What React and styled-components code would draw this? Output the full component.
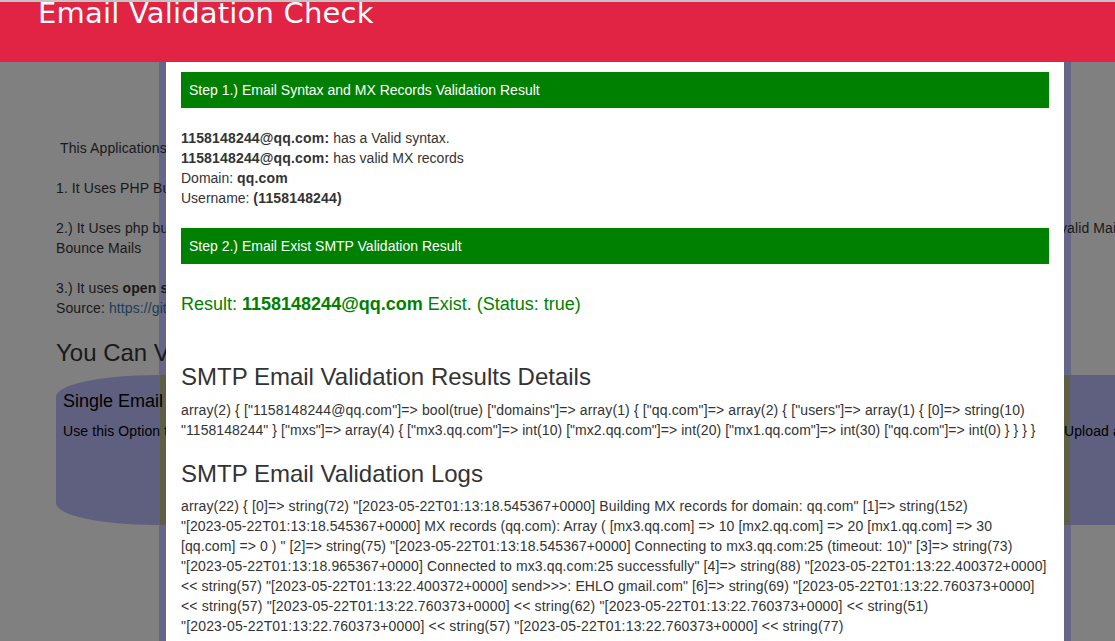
import React from "react";
import styled, { createGlobalStyle } from "styled-components";

const Global = createGlobalStyle`
  html, body { margin: 0; padding: 0; height: 100%; overflow: hidden; background: #808080; }
  body { font-family: "Liberation Sans", Arial, sans-serif; font-size: 14px; line-height: 20px; color: #333; }
  * { box-sizing: border-box; }
`;

const Viewport = styled.div`
  position: relative;
  width: 1115px;
  height: 641px;
  overflow: hidden;
  background: #808080;
`;

const Page = styled.main`
  position: relative;
  z-index: 1;
  width: 1268px;
  padding: 138px 56px 0;
  color: #191919;
  letter-spacing: 0.1px;
`;

const Para = styled.p`
  margin: 0 0 20px;
`;

const Row = styled.div`
  display: flex;
  white-space: nowrap;
`;

const Clip = styled.span`
  flex: none;
  width: ${(p) => p.$w}px;
  overflow: hidden;
`;

const Link = styled.a`
  color: #1a3d5b;
  text-decoration: none;
`;

const PageTitle = styled.h2`
  margin: 22px 0 9px;
  font-size: 24px;
  font-weight: 500;
  line-height: 26px;
  letter-spacing: 0;
`;

const OptionCard = styled.section`
  height: 150px;
  background:
    linear-gradient(90deg,
      transparent 104px, #5f5f44 104px, #5f5f44 110px, transparent 110px,
      transparent 1008px, #5f5f44 1008px, #5f5f44 1014px, transparent 1014px),
    #5f5f7f;
  border-radius: 100px / 22px;
  padding: 16px 7px;
  color: #000;
`;

const OptionTitle = styled.h3`
  margin: 0 0 10px;
  font-size: 18px;
  font-weight: 500;
  line-height: 20px;
  letter-spacing: 0;
`;

const FrameEdge = styled.i`
  position: absolute;
  top: 62px;
  bottom: 0;
  width: 7px;
  left: ${(p) => p.$x}px;
  background: #666688;
`;

const Header = styled.header`
  position: absolute;
  top: 0;
  left: 0;
  right: 0;
  height: 62px;
  overflow: hidden;
  background: #e12344;
  border-top: 2px solid #c4c4c4;
  z-index: 3;
  padding-left: 38px;
`;

const Brand = styled.h1`
  margin: -9px 0 0;
  font-family: "DejaVu Sans", sans-serif;
  font-size: 29px;
  font-weight: 400;
  line-height: 40px;
  letter-spacing: 0.2px;
  color: #fff;
`;

const Modal = styled.div`
  position: absolute;
  top: 62px;
  left: 166px;
  width: 898px;
  height: 579px;
  z-index: 2;
  background: #fff;
  padding: 10px 15px 0;
  overflow: hidden;
`;

const StepBar = styled.div`
  height: 36px;
  background: #008000;
  color: #fff;
  padding: 8px;
`;

const Summary = styled.div`
  margin: 20px 0;
`;

const Strong = styled.strong`
  letter-spacing: 0.17px;
`;

const Result = styled.div`
  margin: 30px 0 50px;
  font-size: 18px;
  line-height: 20px;
  color: #008000;
`;

const SectionTitle = styled.h3`
  margin: 0 0 10px;
  font-size: 24px;
  font-weight: 500;
  line-height: 26px;
`;

const Dump = styled.div`
  margin-top: ${(p) => p.$pull || 0}px;
  margin-bottom: 21px;
`;

const DumpLine = styled.div`
  white-space: nowrap;
  letter-spacing: ${(p) => p.$track}px;
`;

const details = [
  ['array(2) { ["1158148244@qq.com"]=> bool(true) ["domains"]=> array(1) { ["qq.com"]=> array(2) { ["users"]=> array(1) { [0]=> string(10)', 0.13],
  ['"1158148244" } ["mxs"]=> array(4) { ["mx3.qq.com"]=> int(10) ["mx2.qq.com"]=> int(20) ["mx1.qq.com"]=> int(30) ["qq.com"]=> int(0) } } } }', 0.05],
];

const logs = [
  ['array(22) { [0]=> string(72) "[2023-05-22T01:13:18.545367+0000] Building MX records for domain: qq.com" [1]=> string(152)', 0.14],
  ['"[2023-05-22T01:13:18.545367+0000] MX records (qq.com): Array ( [mx3.qq.com] => 10 [mx2.qq.com] => 20 [mx1.qq.com] => 30', 0.06],
  ['[qq.com] => 0 ) " [2]=> string(75) "[2023-05-22T01:13:18.545367+0000] Connecting to mx3.qq.com:25 (timeout: 10)" [3]=> string(73)', 0.095],
  ['"[2023-05-22T01:13:18.965367+0000] Connected to mx3.qq.com:25 successfully" [4]=> string(88) "[2023-05-22T01:13:22.400372+0000]', 0.135],
  ['<< string(57) "[2023-05-22T01:13:22.400372+0000] send>>>: EHLO gmail.com" [6]=> string(69) "[2023-05-22T01:13:22.760373+0000]', 0.125],
  ['<< string(57) "[2023-05-22T01:13:22.760373+0000] << string(62) "[2023-05-22T01:13:22.760373+0000] << string(51)', 0.17],
  ['"[2023-05-22T01:13:22.760373+0000] << string(57) "[2023-05-22T01:13:22.760373+0000] << string(77)', 0.18],
];

export default function App() {
  return (
    <Viewport>
      <Global />
      <FrameEdge $x={159} />
      <FrameEdge $x={1064} />
      <Page>
        <Para>&nbsp;This Applications uses multiple steps to validate an email address</Para>
        <Para>1. It Uses PHP Built-in filters to check the email syntax and its MX records</Para>
        <Para>
          <Row>
            <Clip $w={1004}>2.) It Uses php built-in socket functions to talk to the mail server and check the address</Clip>
            <span>valid Mail</span>
          </Row>
          Bounce Mails
        </Para>
        <Para>
          3.) It uses <strong>open source</strong> library for the SMTP validation
          <br />
          Source: <Link href="#">https://github.com/</Link>
        </Para>
        <PageTitle>You Can Validate Emails in Two Ways</PageTitle>
        <OptionCard>
          <OptionTitle>Single Email Validation</OptionTitle>
          <Row>
            <Clip $w={1001}>Use this Option to validate a single email address</Clip>
            <span>Upload a file</span>
          </Row>
        </OptionCard>
      </Page>
      <Header>
        <Brand>Email Validation Check</Brand>
      </Header>
      <Modal>
        <StepBar>Step 1.) Email Syntax and MX Records Validation Result</StepBar>
        <Summary>
          <Strong>1158148244@qq.com:</Strong> has a Valid syntax.
          <br />
          <Strong>1158148244@qq.com:</Strong> has valid MX records
          <br />
          Domain: <Strong>qq.com</Strong>
          <br />
          Username: <Strong>(1158148244)</Strong>
        </Summary>
        <StepBar>Step 2.) Email Exist SMTP Validation Result</StepBar>
        <Result>
          Result: <strong>1158148244@qq.com</strong> Exist. (Status: true)
        </Result>
        <SectionTitle>SMTP Email Validation Results Details</SectionTitle>
        <Dump>
          {details.map(([line, track]) => (
            <DumpLine key={line} $track={track}>{line}</DumpLine>
          ))}
        </Dump>
        <SectionTitle>SMTP Email Validation Logs</SectionTitle>
        <Dump $pull={-1}>
          {logs.map(([line, track]) => (
            <DumpLine key={line} $track={track}>{line}</DumpLine>
          ))}
        </Dump>
      </Modal>
    </Viewport>
  );
}
